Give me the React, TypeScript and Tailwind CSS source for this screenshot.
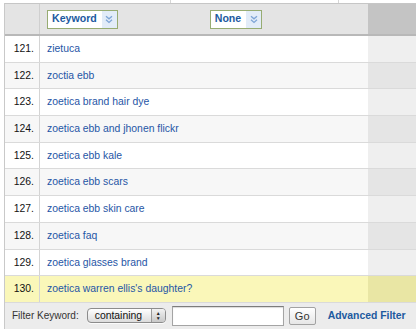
import React from "react";

const rows = [
  { n: 121, k: "zietuca" },
  { n: 122, k: "zoctia ebb" },
  { n: 123, k: "zoetica brand hair dye" },
  { n: 124, k: "zoetica ebb and jhonen flickr" },
  { n: 125, k: "zoetica ebb kale" },
  { n: 126, k: "zoetica ebb scars" },
  { n: 127, k: "zoetica ebb skin care" },
  { n: 128, k: "zoetica faq" },
  { n: 129, k: "zoetica glasses brand" },
  { n: 130, k: "zoetica warren ellis's daughter?" },
];

const Chevrons = () => (
  <svg width="8" height="9" viewBox="0 0 8 9" fill="none">
    <path d="M1 1.2 L4 3.8 L7 1.2" stroke="#7ea5d6" strokeWidth="1.3" />
    <path d="M1 4.8 L4 7.4 L7 4.8" stroke="#7ea5d6" strokeWidth="1.3" />
  </svg>
);

const HeaderSelect = ({ label }: { label: string }) => (
  <div className="flex h-[19px] items-stretch border border-[#97ac72] bg-white">
    <span className="flex items-center pl-[4px] pr-[5px] text-[10.6px] font-bold text-[#1d5a9f]">
      {label}
    </span>
    <span className="flex w-[15px] items-center justify-center bg-[#e2ecf8]">
      <Chevrons />
    </span>
  </div>
);

const App = () => {
  return (
    <div className="relative h-[329px] w-[416px] overflow-hidden bg-white font-['Liberation_Sans',Arial,sans-serif]">
      {/* leftover of the block above */}
      <div className="flex h-[3px]">
        <div className="w-[170px]" />
        <div className="w-px bg-[#d6d6d6]" />
        <div className="w-[167px]" />
        <div className="w-px bg-[#d6d6d6]" />
      </div>

      <div className="ml-[4px] border-l border-[#c9c9c9]">
        {/* header */}
        <div className="flex h-[33px] border-t border-b-2 border-t-[#c6c6c6] border-b-[#b8b8b8]">
          <div className="w-[35px] border-r border-[#cfcfcf] bg-[#e4e4e4]" />
          <div className="flex w-[328px] items-center bg-[#e4e4e4] pl-[7px]">
            <HeaderSelect label="Keyword" />
            <div className="ml-[92px]">
              <HeaderSelect label="None" />
            </div>
          </div>
          <div className="flex-1 bg-[#c4c4c4]" />
        </div>

        {/* rows */}
        {rows.map((r, i) => {
          const last = r.n === 130;
          const main = last ? "bg-[#faf7b9]" : i % 2 === 0 ? "bg-white" : "bg-[#f7f7f7]";
          const side = last ? "bg-[#e9e6a4]" : i % 2 === 0 ? "bg-[#efefef]" : "bg-[#e5e5e5]";
          return (
            <div key={r.n} className="flex h-[26.7px] border-b border-[#dadada] text-[10.4px]">
              <div className={`flex w-[35px] items-center justify-end border-r border-[#d4d4d4] pr-[5px] text-[#111] ${main}`}>
                {r.n}.
              </div>
              <div className={`flex w-[328px] items-center pl-[7px] text-[#1f56a6] ${main}`}>
                {r.k}
              </div>
              <div className={`flex-1 ${side}`} />
            </div>
          );
        })}

        {/* filter bar */}
        <div className="flex h-[26px] items-center bg-[#ececec] pl-[7px] text-[10px]">
          <span className="text-[#333]">Filter Keyword:</span>
          <div className="ml-[8px] flex h-[15px] w-[79px] items-stretch overflow-hidden rounded-[4px] border border-[#8c8c8c] bg-gradient-to-b from-white to-[#dcdcdc] shadow-[0_1px_0_rgba(255,255,255,0.8)]">
            <span className="flex flex-1 items-center pl-[7px] text-[10.4px] text-[#111]">containing</span>
            <span className="flex w-[14px] flex-col items-center justify-center border-l border-[#9a9a9a] bg-gradient-to-b from-[#f2f2f2] to-[#c8c8c8] text-[5px] leading-[5px] text-[#222]">
              <span>▲</span>
              <span>▼</span>
            </span>
          </div>
          <div className="ml-[6px] h-[20px] w-[112px] border border-[#a4a4a4] border-t-[#7c7c7c] bg-white shadow-[inset_0_1px_1px_rgba(0,0,0,0.15)]" />
          <div className="ml-[5px] flex h-[18px] w-[27px] items-center justify-center rounded-[2px] border border-[#a2a2a2] bg-gradient-to-b from-white to-[#e6e6e6] text-[11px] text-[#333]">
            Go
          </div>
          <span className="ml-[12px] text-[10.4px] font-bold text-[#1d5a9f]">Advanced Filter</span>
        </div>
      </div>
    </div>
  );
};

export default App;
